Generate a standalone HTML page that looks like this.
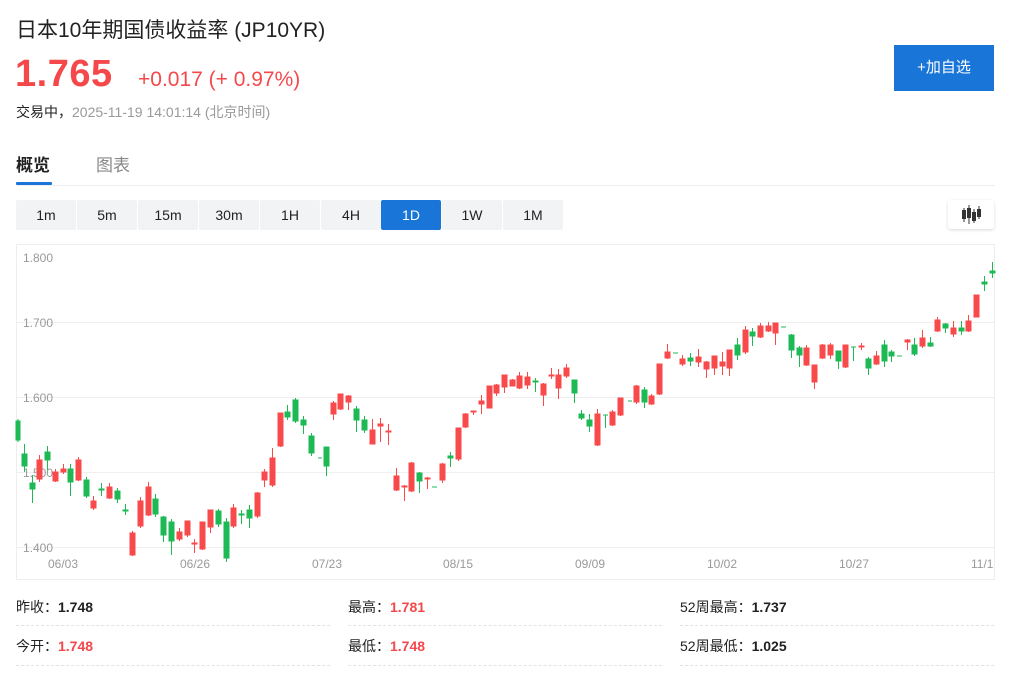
<!DOCTYPE html>
<html><head><meta charset="utf-8">
<style>
*{margin:0;padding:0;box-sizing:border-box}
body{width:1024px;height:681px;background:#fff;position:relative;overflow:hidden;font-family:"Liberation Sans","Noto Sans CJK SC",sans-serif;color:#222}
.a{position:absolute;white-space:nowrap}
.btn{position:absolute;top:200px;height:30px;width:60px;background:#f2f3f5;font-size:14px;color:#222;text-align:center;line-height:30px;border-radius:2px}
.lbl{font-size:14px;color:#222}
.v{font-weight:bold;font-size:14px}
.red{color:#f5484b}
.dash{position:absolute;height:0;border-top:1px dashed #e3e3e3;width:314px}
</style></head><body>
<div class="a" style="left:16px;top:14px;font-size:21px;color:#222">日本10年期国债收益率 (JP10YR)</div>
<div class="a" style="left:15px;top:53px;font-size:38px;font-weight:bold;color:#f5484b;letter-spacing:0.5px">1.765</div>
<div class="a" style="left:138px;top:68px;font-size:21px;color:#f5484b">+0.017 (+ 0.97%)</div>
<div class="a" style="left:16px;top:102px;font-size:14px;color:#222">交易中，<span style="color:#999">2025-11-19 14:01:14 (北京时间)</span></div>
<div class="a" style="left:894px;top:45px;width:100px;height:46px;background:#1976d8;color:#fff;font-size:15px;text-align:center;line-height:46px">+加自选</div>
<div class="a" style="left:16px;top:151px;font-size:17px;font-weight:bold;color:#222">概览</div>
<div class="a" style="left:96px;top:151px;font-size:17px;color:#888">图表</div>
<div class="a" style="left:16px;top:185px;width:979px;height:1px;background:#eee"></div>
<div class="a" style="left:16px;top:182px;width:36px;height:3px;background:#1976d8;border-radius:1px"></div>
<div class="btn" style="left:16px">1m</div>
<div class="btn" style="left:77px">5m</div>
<div class="btn" style="left:138px">15m</div>
<div class="btn" style="left:199px">30m</div>
<div class="btn" style="left:260px">1H</div>
<div class="btn" style="left:321px">4H</div>
<div class="btn" style="left:381px;background:#1976d8;color:#fff">1D</div>
<div class="btn" style="left:442px">1W</div>
<div class="btn" style="left:503px">1M</div>
<div class="a" style="left:948px;top:200px;width:46px;height:29px;background:#fff;border-radius:3px;box-shadow:0 1px 3px rgba(0,0,0,0.15)">
<svg width="46" height="29"><g stroke="#333" stroke-width="1"><line x1="16" y1="8" x2="16" y2="22"/><line x1="21" y1="5" x2="21" y2="24"/><line x1="26" y1="9" x2="26" y2="23"/><line x1="31" y1="6" x2="31" y2="19"/></g><g fill="#333"><rect x="14" y="10" width="4" height="9"/><rect x="19" y="8" width="4" height="10"/><rect x="24" y="12" width="4" height="9"/><rect x="29" y="9" width="4" height="8"/></g></svg></div>
<div class="a" style="left:16px;top:244px;width:979px;height:336px;border:1px solid #eee"></div>
<svg class="a" style="left:0;top:0" width="1024" height="681">
<g stroke="#efefef" stroke-width="1"><line x1="17" y1="322.5" x2="994" y2="322.5"/><line x1="17" y1="397.5" x2="994" y2="397.5"/><line x1="17" y1="472.5" x2="994" y2="472.5"/><line x1="17" y1="547.5" x2="994" y2="547.5"/></g>
<g font-size="12" fill="#999" font-family="Liberation Sans,sans-serif"><text x="23" y="262">1.800</text><text x="23" y="327">1.700</text><text x="23" y="402">1.600</text><text x="23" y="477">1.500</text><text x="23" y="552">1.400</text>
<text x="48" y="568">06/03</text><text x="180" y="568">06/26</text><text x="312" y="568">07/23</text><text x="443" y="568">08/15</text><text x="575" y="568">09/09</text><text x="707" y="568">10/02</text><text x="839" y="568">10/27</text><text x="971" y="568">11/1</text></g>
<g stroke-width="1">
<g stroke="#1db954" fill="#1db954">
<line x1="18" y1="419" x2="18" y2="442"/><rect x="16" y="421" width="4" height="19"/>
<line x1="24.5" y1="444" x2="24.5" y2="472"/><rect x="22" y="454" width="5" height="12"/>
<line x1="32.5" y1="475" x2="32.5" y2="503"/><rect x="30" y="483" width="5" height="6"/>
<line x1="47.5" y1="446" x2="47.5" y2="470"/><rect x="45" y="452" width="5" height="8"/>
<line x1="70.5" y1="464" x2="70.5" y2="496"/><rect x="68" y="469" width="5" height="13"/>
<line x1="86.5" y1="477" x2="86.5" y2="498"/><rect x="84" y="480" width="5" height="16"/>
<line x1="101.5" y1="483" x2="101.5" y2="496"/><rect x="99" y="489" width="5" height="1"/>
<line x1="117.5" y1="488" x2="117.5" y2="503"/><rect x="115" y="491" width="5" height="8"/>
<line x1="125.5" y1="504" x2="125.5" y2="515"/><rect x="123" y="510" width="5" height="1"/>
<line x1="155.5" y1="494" x2="155.5" y2="517"/><rect x="153" y="499" width="5" height="15"/>
<line x1="163.5" y1="516" x2="163.5" y2="542"/><rect x="161" y="517" width="5" height="18"/>
<line x1="171.5" y1="519" x2="171.5" y2="555"/><rect x="169" y="522" width="5" height="19"/>
<line x1="218.5" y1="509" x2="218.5" y2="527"/><rect x="216" y="511" width="5" height="13"/>
<line x1="226.5" y1="518" x2="226.5" y2="562"/><rect x="224" y="522" width="5" height="36"/>
<line x1="241.5" y1="510" x2="241.5" y2="524"/><rect x="239" y="514" width="5" height="1"/>
<line x1="249.5" y1="505" x2="249.5" y2="528"/><rect x="247" y="510" width="5" height="8"/>
<line x1="287.5" y1="405" x2="287.5" y2="420"/><rect x="285" y="412" width="5" height="5"/>
<line x1="295.5" y1="398" x2="295.5" y2="423"/><rect x="293" y="400" width="5" height="21"/>
<line x1="303.5" y1="416" x2="303.5" y2="434"/><rect x="301" y="420" width="5" height="5"/>
<line x1="311.5" y1="433" x2="311.5" y2="456"/><rect x="309" y="436" width="5" height="17"/>
<line x1="318" y1="458" x2="322" y2="458"/>
<line x1="326.5" y1="447" x2="326.5" y2="476"/><rect x="324" y="447" width="5" height="19"/>
<line x1="356.5" y1="406" x2="356.5" y2="432"/><rect x="354" y="409" width="5" height="11"/>
<line x1="364.5" y1="416" x2="364.5" y2="433"/><rect x="362" y="420" width="5" height="10"/>
<line x1="419.5" y1="472" x2="419.5" y2="493"/><rect x="417" y="473" width="5" height="8"/>
<line x1="432" y1="487" x2="437" y2="487"/>
<line x1="450.5" y1="452" x2="450.5" y2="467"/><rect x="448" y="456" width="5" height="2"/>
<line x1="535.5" y1="378" x2="535.5" y2="392"/><rect x="533" y="381" width="5" height="1"/>
<line x1="574.5" y1="380" x2="574.5" y2="403"/><rect x="572" y="380" width="5" height="13"/>
<line x1="581.5" y1="410" x2="581.5" y2="420"/><rect x="579" y="414" width="5" height="4"/>
<line x1="589.5" y1="414" x2="589.5" y2="432"/><rect x="587" y="420" width="5" height="6"/>
<line x1="605.5" y1="415" x2="605.5" y2="428"/><line x1="603" y1="415" x2="608" y2="415"/>
<line x1="628" y1="401" x2="632" y2="401"/>
<line x1="644.5" y1="387" x2="644.5" y2="408"/><rect x="642" y="390" width="5" height="12"/>
<line x1="673" y1="353" x2="678" y2="353"/>
<line x1="690.5" y1="353" x2="690.5" y2="366"/><rect x="688" y="358" width="5" height="3"/>
<line x1="737.5" y1="338" x2="737.5" y2="360"/><rect x="735" y="345" width="5" height="10"/>
<line x1="752.5" y1="328" x2="752.5" y2="346"/><rect x="750" y="332" width="5" height="4"/>
<line x1="781" y1="327" x2="786" y2="327"/>
<line x1="791.5" y1="334" x2="791.5" y2="358"/><rect x="789" y="335" width="5" height="15"/>
<line x1="799.5" y1="346" x2="799.5" y2="367"/><rect x="797" y="348" width="5" height="7"/>
<line x1="838.5" y1="351" x2="838.5" y2="369"/><rect x="836" y="351" width="5" height="10"/>
<line x1="853.5" y1="347" x2="853.5" y2="361"/><line x1="851" y1="347" x2="856" y2="347"/>
<line x1="868.5" y1="357" x2="868.5" y2="375"/><rect x="866" y="359" width="5" height="9"/>
<line x1="884.5" y1="340" x2="884.5" y2="367"/><rect x="882" y="345" width="5" height="16"/>
<line x1="891.5" y1="350" x2="891.5" y2="362"/><rect x="889" y="352" width="5" height="4"/>
<line x1="897" y1="356" x2="902" y2="356"/>
<line x1="914.5" y1="338" x2="914.5" y2="356"/><rect x="912" y="345" width="5" height="9"/>
<line x1="930.5" y1="337" x2="930.5" y2="347"/><rect x="928" y="343" width="5" height="3"/>
<line x1="945.5" y1="323" x2="945.5" y2="333"/><rect x="943" y="324" width="5" height="4"/>
<line x1="961.5" y1="321" x2="961.5" y2="335"/><rect x="959" y="328" width="5" height="3"/>
<line x1="984.5" y1="276" x2="984.5" y2="291"/><rect x="982" y="282" width="5" height="2"/>
<line x1="992.5" y1="262" x2="992.5" y2="278"/><rect x="990" y="271" width="5" height="2"/>
</g>
<g stroke="#f84a4b" fill="#f84a4b">
<line x1="39.5" y1="455" x2="39.5" y2="482"/><rect x="37" y="460" width="5" height="19"/>
<line x1="55.5" y1="469" x2="55.5" y2="482"/><rect x="53" y="472" width="5" height="9"/>
<line x1="63.5" y1="464" x2="63.5" y2="474"/><rect x="61" y="469" width="5" height="3"/>
<line x1="78.5" y1="457" x2="78.5" y2="481"/><rect x="76" y="460" width="5" height="20"/>
<line x1="93.5" y1="496" x2="93.5" y2="510"/><rect x="91" y="501" width="5" height="7"/>
<line x1="109.5" y1="483" x2="109.5" y2="499"/><rect x="107" y="487" width="5" height="11"/>
<line x1="132.5" y1="531" x2="132.5" y2="556"/><rect x="130" y="533" width="5" height="22"/>
<line x1="140.5" y1="497" x2="140.5" y2="528"/><rect x="138" y="501" width="5" height="25"/>
<line x1="148.5" y1="482" x2="148.5" y2="516"/><rect x="146" y="487" width="5" height="28"/>
<line x1="179.5" y1="528" x2="179.5" y2="541"/><rect x="177" y="532" width="5" height="7"/>
<line x1="187.5" y1="521" x2="187.5" y2="537"/><rect x="185" y="521" width="5" height="14"/>
<line x1="194.5" y1="539" x2="194.5" y2="553"/><rect x="192" y="543" width="5" height="1"/>
<line x1="202.5" y1="522" x2="202.5" y2="550"/><rect x="200" y="522" width="5" height="27"/>
<line x1="210.5" y1="510" x2="210.5" y2="533"/><rect x="208" y="510" width="5" height="17"/>
<line x1="233.5" y1="504" x2="233.5" y2="528"/><rect x="231" y="508" width="5" height="18"/>
<line x1="257.5" y1="492" x2="257.5" y2="518"/><rect x="255" y="493" width="5" height="23"/>
<line x1="264.5" y1="469" x2="264.5" y2="487"/><rect x="262" y="472" width="5" height="8"/>
<line x1="272.5" y1="448" x2="272.5" y2="487"/><rect x="270" y="458" width="5" height="27"/>
<line x1="280.5" y1="413" x2="280.5" y2="447"/><rect x="278" y="413" width="5" height="33"/>
<line x1="333.5" y1="401" x2="333.5" y2="420"/><rect x="331" y="403" width="5" height="11"/>
<line x1="340.5" y1="394" x2="340.5" y2="410"/><rect x="338" y="394" width="5" height="15"/>
<line x1="348.5" y1="395" x2="348.5" y2="410"/><rect x="346" y="396" width="5" height="6"/>
<line x1="372.5" y1="419" x2="372.5" y2="444"/><rect x="370" y="430" width="5" height="14"/>
<line x1="380.5" y1="418" x2="380.5" y2="442"/><rect x="378" y="424" width="5" height="2"/>
<line x1="388.5" y1="424" x2="388.5" y2="445"/><rect x="386" y="431" width="5" height="1"/>
<line x1="396.5" y1="468" x2="396.5" y2="491"/><rect x="394" y="476" width="5" height="14"/>
<line x1="404.5" y1="485" x2="404.5" y2="501"/><rect x="402" y="486" width="5" height="1"/>
<line x1="411.5" y1="462" x2="411.5" y2="492"/><rect x="409" y="463" width="5" height="28"/>
<line x1="427.5" y1="477" x2="427.5" y2="489"/><rect x="425" y="478" width="5" height="1"/>
<line x1="442.5" y1="463" x2="442.5" y2="483"/><rect x="440" y="464" width="5" height="16"/>
<line x1="458.5" y1="428" x2="458.5" y2="461"/><rect x="456" y="428" width="5" height="31"/>
<line x1="465.5" y1="413" x2="465.5" y2="428"/><rect x="463" y="414" width="5" height="13"/>
<line x1="473.5" y1="411" x2="473.5" y2="415"/><rect x="471" y="411" width="5" height="1"/>
<line x1="481.5" y1="395" x2="481.5" y2="414"/><rect x="479" y="401" width="5" height="3"/>
<line x1="489.5" y1="386" x2="489.5" y2="408"/><rect x="487" y="386" width="5" height="22"/>
<line x1="496.5" y1="384" x2="496.5" y2="396"/><rect x="494" y="385" width="5" height="8"/>
<line x1="504.5" y1="375" x2="504.5" y2="393"/><rect x="502" y="375" width="5" height="12"/>
<line x1="512.5" y1="379" x2="512.5" y2="386"/><rect x="510" y="380" width="5" height="6"/>
<line x1="519.5" y1="372" x2="519.5" y2="389"/><rect x="517" y="376" width="5" height="12"/>
<line x1="527.5" y1="372" x2="527.5" y2="389"/><rect x="525" y="377" width="5" height="8"/>
<line x1="543.5" y1="383" x2="543.5" y2="406"/><rect x="541" y="384" width="5" height="11"/>
<line x1="551.5" y1="368" x2="551.5" y2="379"/><rect x="549" y="375" width="5" height="1"/>
<line x1="558.5" y1="369" x2="558.5" y2="399"/><rect x="556" y="375" width="5" height="13"/>
<line x1="566.5" y1="364" x2="566.5" y2="378"/><rect x="564" y="368" width="5" height="8"/>
<line x1="597.5" y1="409" x2="597.5" y2="446"/><rect x="595" y="414" width="5" height="31"/>
<line x1="612.5" y1="410" x2="612.5" y2="426"/><rect x="610" y="412" width="5" height="13"/>
<line x1="620.5" y1="398" x2="620.5" y2="416"/><rect x="618" y="398" width="5" height="17"/>
<line x1="636.5" y1="385" x2="636.5" y2="404"/><rect x="634" y="386" width="5" height="16"/>
<line x1="651.5" y1="394" x2="651.5" y2="405"/><rect x="649" y="396" width="5" height="8"/>
<line x1="659.5" y1="364" x2="659.5" y2="395"/><rect x="657" y="364" width="5" height="30"/>
<line x1="667.5" y1="344" x2="667.5" y2="359"/><rect x="665" y="352" width="5" height="6"/>
<line x1="682.5" y1="355" x2="682.5" y2="366"/><rect x="680" y="359" width="5" height="5"/>
<line x1="698.5" y1="349" x2="698.5" y2="367"/><rect x="696" y="357" width="5" height="5"/>
<line x1="706.5" y1="361" x2="706.5" y2="378"/><rect x="704" y="362" width="5" height="7"/>
<line x1="714.5" y1="356" x2="714.5" y2="375"/><rect x="712" y="356" width="5" height="12"/>
<line x1="722.5" y1="352" x2="722.5" y2="375"/><rect x="720" y="362" width="5" height="4"/>
<line x1="729.5" y1="350" x2="729.5" y2="376"/><rect x="727" y="350" width="5" height="18"/>
<line x1="745.5" y1="326" x2="745.5" y2="354"/><rect x="743" y="330" width="5" height="22"/>
<line x1="760.5" y1="323" x2="760.5" y2="338"/><rect x="758" y="326" width="5" height="11"/>
<line x1="768.5" y1="322" x2="768.5" y2="332"/><rect x="766" y="326" width="5" height="5"/>
<line x1="775.5" y1="323" x2="775.5" y2="345"/><rect x="773" y="323" width="5" height="10"/>
<line x1="806.5" y1="345" x2="806.5" y2="366"/><rect x="804" y="348" width="5" height="17"/>
<line x1="814.5" y1="365" x2="814.5" y2="389"/><rect x="812" y="365" width="5" height="17"/>
<line x1="822.5" y1="344" x2="822.5" y2="359"/><rect x="820" y="345" width="5" height="13"/>
<line x1="830.5" y1="343" x2="830.5" y2="359"/><rect x="828" y="345" width="5" height="10"/>
<line x1="845.5" y1="345" x2="845.5" y2="368"/><rect x="843" y="345" width="5" height="22"/>
<line x1="861.5" y1="343" x2="861.5" y2="350"/><rect x="859" y="346" width="5" height="1"/>
<line x1="876.5" y1="351" x2="876.5" y2="365"/><rect x="874" y="356" width="5" height="8"/>
<line x1="907.5" y1="339" x2="907.5" y2="350"/><rect x="905" y="340" width="5" height="2"/>
<line x1="922.5" y1="330" x2="922.5" y2="348"/><rect x="920" y="338" width="5" height="8"/>
<line x1="937.5" y1="317" x2="937.5" y2="332"/><rect x="935" y="320" width="5" height="11"/>
<line x1="953.5" y1="321" x2="953.5" y2="337"/><rect x="951" y="328" width="5" height="6"/>
<line x1="968.5" y1="315" x2="968.5" y2="332"/><rect x="966" y="321" width="5" height="10"/>
<line x1="976.5" y1="295" x2="976.5" y2="317"/><rect x="974" y="295" width="5" height="22"/>
</g>
</g>
</svg>
<div class="a lbl" style="left:16px;top:597px">昨收：<span class="v">1.748</span></div>
<div class="a lbl" style="left:348px;top:597px">最高：<span class="v red">1.781</span></div>
<div class="a lbl" style="left:680px;top:597px">52周最高：<span class="v">1.737</span></div>
<div class="a lbl" style="left:16px;top:636px">今开：<span class="v red">1.748</span></div>
<div class="a lbl" style="left:348px;top:636px">最低：<span class="v red">1.748</span></div>
<div class="a lbl" style="left:680px;top:636px">52周最低：<span class="v">1.025</span></div>
<div class="dash" style="left:16px;top:625px"></div>
<div class="dash" style="left:348px;top:625px"></div>
<div class="dash" style="left:680px;top:625px"></div>
<div class="dash" style="left:16px;top:665px"></div>
<div class="dash" style="left:348px;top:665px"></div>
<div class="dash" style="left:680px;top:665px"></div>
</body></html>
